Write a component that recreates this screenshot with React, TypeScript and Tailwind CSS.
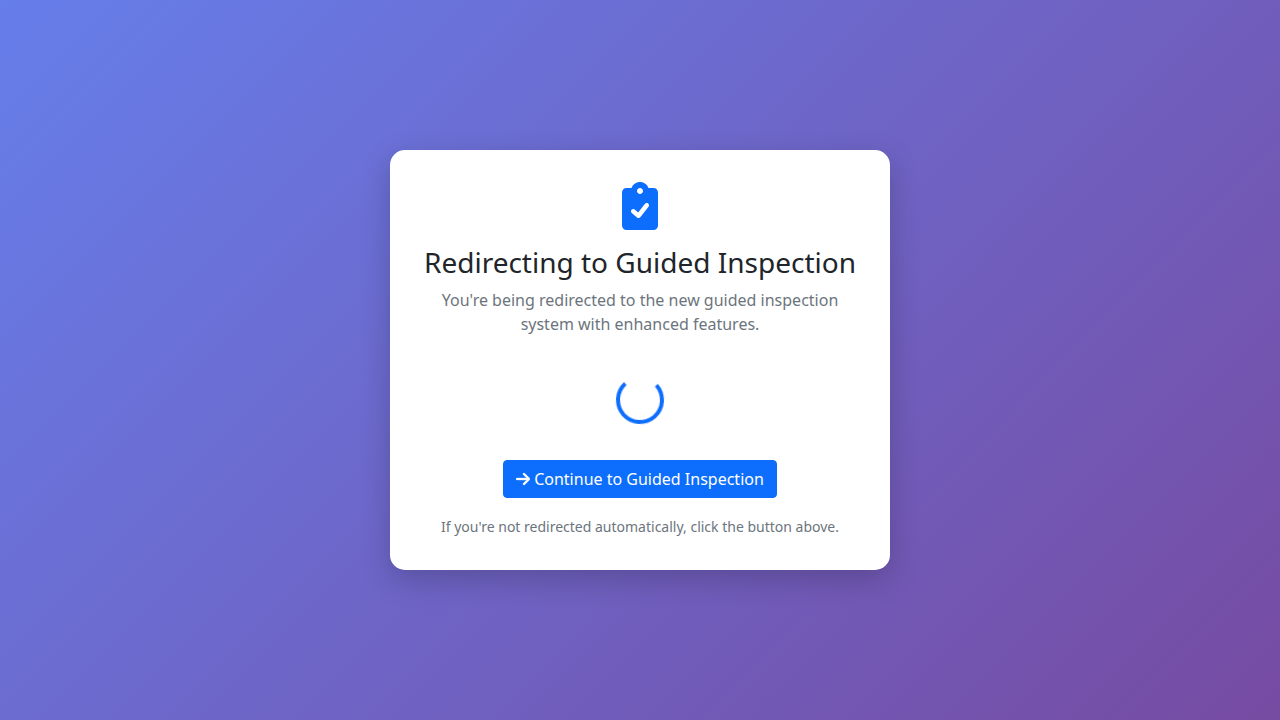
function ClipboardCheckIcon({ className }: { className?: string }) {
  return (
    <svg viewBox="0 0 384 512" fill="currentColor" className={className} aria-hidden="true">
      <path d="M336 64h-53.88C268.9 26.8 233.7 0 192 0S115.1 26.8 101.9 64H48C21.5 64 0 85.48 0 112v352C0 490.5 21.5 512 48 512h288c26.5 0 48-21.48 48-48v-352C384 85.48 362.5 64 336 64zM192 64c17.67 0 32 14.33 32 32s-14.33 32-32 32S160 113.7 160 96S174.3 64 192 64zM282.9 262.8l-88 112c-4.047 5.156-10.02 8.438-16.53 9.062C177.6 383.1 176.8 384 176 384c-5.703 0-11.25-2.031-15.62-5.781l-56-48c-10.06-8.625-11.22-23.77-2.594-33.83c8.609-10.06 23.77-11.22 33.83-2.594l36.98 31.69l72.52-92.28c8.188-10.44 23.3-12.22 33.7-4.062C289.3 237.3 291.1 252.4 282.9 262.8z" />
    </svg>
  );
}

function ArrowRightIcon({ className }: { className?: string }) {
  return (
    <svg viewBox="0 0 448 512" fill="currentColor" stroke="currentColor" strokeWidth="10" className={className} aria-hidden="true">
      <path d="M438.6 278.6l-160 160C272.4 444.9 264.2 448 256 448s-16.38-3.125-22.62-9.375c-12.5-12.5-12.5-32.75 0-45.25L338.8 288H32C14.33 288 .0016 273.7 .0016 256S14.33 224 32 224h306.8l-105.4-105.4c-12.5-12.5-12.5-32.75 0-45.25s32.75-12.5 45.25 0l160 160C451.1 245.9 451.1 266.1 438.6 278.6z" />
    </svg>
  );
}

export default function App() {
  return (
    <main className="flex min-h-screen items-center justify-center bg-[linear-gradient(135deg,#667eea_0%,#764ba2_100%)] font-['Noto_Sans',sans-serif] text-base text-[#212529]">
      <section className="flex w-full max-w-[500px] flex-col items-center rounded-[15px] bg-white p-8 text-center shadow-[0_10px_30px_rgba(0,0,0,0.2)]">
        <ClipboardCheckIcon className="mb-4 h-12 w-9 text-[#0d6efd]" />
        <h1 className="mb-2.5 text-[28px] leading-8 font-normal">Redirecting to Guided Inspection</h1>
        <p className="text-[#6c757d]">
          You're being redirected to the new guided inspection system with enhanced features.
        </p>
        <div
          role="status"
          aria-label="Loading"
          className="mt-10 mb-9 size-12 rotate-[3deg] rounded-full border-4 border-[#0d6efd] border-t-transparent will-change-transform"
        />
        <a
          href="#guided-inspection"
          className="flex items-center gap-1 rounded-[4px] border border-[#0d6efd] bg-[#0d6efd] px-3 py-1.5 text-white"
        >
          <ArrowRightIcon className="h-4 w-3.5" />
          Continue to Guided Inspection
        </a>
        <p className="mt-[18px] text-sm leading-[22px] text-[#6c757d]">
          If you're not redirected automatically, click the button above.
        </p>
      </section>
    </main>
  );
}
